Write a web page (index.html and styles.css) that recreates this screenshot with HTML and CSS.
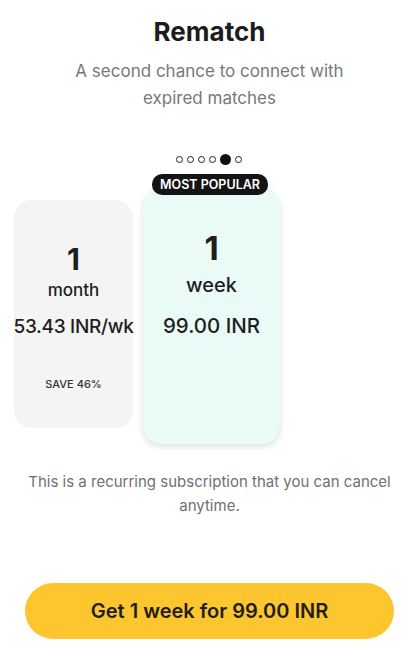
FILE: index.html
```html
<!DOCTYPE html>
<html>
<head>
<meta charset="utf-8">
<link rel="stylesheet" href="styles.css">
</head>
<body>
<div class="page">
  <h1 class="title">Rematch</h1>
  <p class="subtitle">A second chance to connect with<br>expired matches</p>
  <div class="dots">
    <span class="dot"></span><span class="dot"></span><span class="dot"></span><span class="dot"></span><span class="dot active"></span><span class="dot"></span>
  </div>
  <div class="plans">
    <div class="plan plan-side">
      <div class="num">1</div>
      <div class="unit">month</div>
      <div class="price">53.43 INR/wk</div>
      <div class="save">SAVE 46%</div>
    </div>
    <div class="plan-wrap">
      <div class="badge">MOST POPULAR</div>
      <div class="plan plan-main">
        <div class="num">1</div>
        <div class="unit">week</div>
        <div class="price">99.00 INR</div>
      </div>
    </div>
  </div>
  <p class="note">This is a recurring subscription that you can cancel<br>anytime.</p>
  <button class="cta">Get 1 week for 99.00 INR</button>
</div>
</body>
</html>
```
FILE: styles.css
```css
* { box-sizing: border-box; }
html, body { margin: 0; padding: 0; background: #fff; }
body { font-family: Inter, "Noto Sans", sans-serif; color: #1e1e1e; }
.page { width: 419px; height: 667px; display: flex; flex-direction: column; align-items: center; }
.title { margin: 16px 0 0; font-size: 26px; line-height: 32px; font-weight: 700; color: #1c1c1c; }
.subtitle { margin: 10px 0 0; font-size: 17px; line-height: 27px; color: #787878; text-align: center; }
.dots { margin-top: 42px; height: 11px; display: flex; align-items: center; gap: 4px; align-self: flex-start; padding-left: 176px; }
.dot { width: 7px; height: 7px; border: 1.6px solid #222; border-radius: 50%; }
.dot.active { width: 11px; height: 11px; background: #111; border: none; }
.plans { margin-top: 9px; align-self: stretch; display: flex; align-items: flex-start; gap: 10px; padding-left: 14px; }
.plan { display: flex; flex-direction: column; align-items: center; border-radius: 18px; }
.plan-side { width: 119px; height: 228px; margin-top: 26px; background: #f4f4f4; padding-top: 41px; }
.plan-wrap { position: relative; padding-top: 14px; }
.badge { position: absolute; top: 0; left: 9px; width: 116px; height: 21px; border-radius: 10px; background: #141414; color: #fff; font-size: 12.5px; font-weight: 600; line-height: 21px; text-align: center; z-index: 1; }
.plan-main { width: 137px; height: 256px; background: #eafaf7; box-shadow: 0 3px 6px rgba(0,0,0,0.12); padding-top: 42px; }
.num { font-size: 30px; line-height: 36px; font-weight: 700; }
.plan-main .num { font-size: 33px; }
.unit { font-size: 17px; line-height: 24px; font-weight: 500; margin-top: 1px; }
.plan-main .unit { font-size: 20px; margin-top: 7px; }
.price { font-size: 19px; line-height: 24px; font-weight: 500; margin-top: 13px; white-space: nowrap; letter-spacing: -0.3px; }
.plan-main .price { margin-top: 17px; font-size: 20.5px; letter-spacing: 0; }
.save { font-size: 11px; line-height: 14px; font-weight: 500; margin-top: 38px; color: #333; }
.note { margin: 26px 0 0; font-size: 15px; line-height: 24px; color: #707070; text-align: center; }
.cta { margin-top: 65px; width: 369px; height: 56px; border: none; border-radius: 28px; background: #fdc52e; font-family: inherit; font-size: 20px; font-weight: 600; color: #1f1f1f; }
```
